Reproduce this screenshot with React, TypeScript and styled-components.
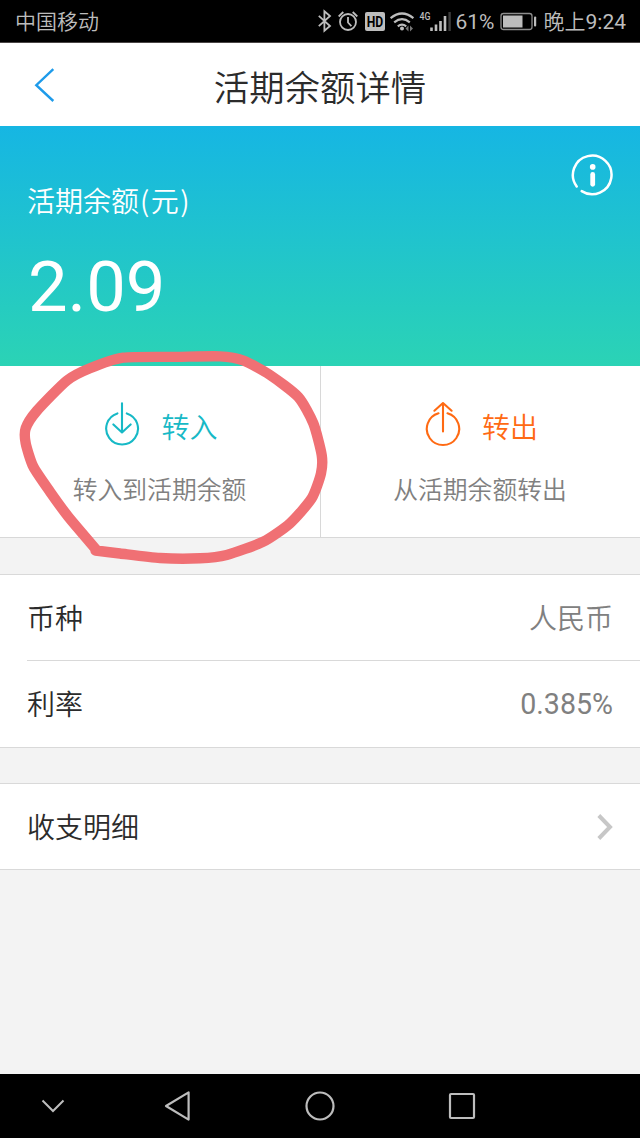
import React from 'react';
import styled, { createGlobalStyle } from 'styled-components';

const GlobalStyle = createGlobalStyle`
  * { box-sizing: border-box; }
  body {
    margin: 0;
    background: #f3f3f3;
    font-family: Roboto, 'Noto Sans CJK SC', sans-serif;
    font-weight: 350;
  }
  svg { display: block; flex: none; }
`;

const Screen = styled.div`
  position: relative;
  width: 640px;
  height: 1138px;
  display: flex;
  flex-direction: column;
  overflow: hidden;
  background: #f3f3f3;
`;

const StatusBar = styled.header`
  height: 43px;
  flex: none;
  display: flex;
  align-items: center;
  justify-content: space-between;
  padding: 0 14px 0 15px;
  background: #000;
  border-bottom: 1px solid #4a4646;
  color: #bdbdbd;
  font-size: 21px;
  line-height: 42px;
  white-space: nowrap;
`;

const StatusGroup = styled.div`
  display: flex;
  align-items: center;
`;

const StatusText = styled.span<{ $width?: number; $regular?: boolean }>`
  width: ${(p) => (p.$width ? `${p.$width}px` : 'auto')};
  padding-top: 2px;
  font-weight: ${(p) => (p.$regular ? 400 : 350)};
`;

const TitleBar = styled.div`
  height: 83px;
  flex: none;
  display: grid;
  grid-template-columns: 90px 1fr 90px;
  align-items: center;
  background: #fff;
`;

const BackButton = styled.button`
  height: 83px;
  padding: 0 0 0 34px;
  border: 0;
  background: none;
`;

const Title = styled.h1`
  margin: 0;
  padding-top: 8px;
  text-align: center;
  font-size: 35.4px;
  line-height: 48px;
  font-weight: 350;
  color: #2b2b2b;
`;

const Hero = styled.section`
  height: 240px;
  flex: none;
  display: flex;
  justify-content: space-between;
  padding: 28px 27px 0;
  background: linear-gradient(#16b6e3, #2bd3b5);
  color: #fff;
`;

const Balance = styled.div`
  display: flex;
  flex-direction: column;
  padding-top: 25px;
`;

const BalanceLabel = styled.span`
  font-family: 'Noto Sans CJK SC', sans-serif;
  font-size: 28px;
  line-height: 42px;
`;

const Unit = styled.span`
  margin-left: 1px;
  letter-spacing: 1.5px;
`;

const Amount = styled.span`
  margin: 26px 0 0 1px;
  font-size: 70.5px;
  line-height: 80px;
  font-weight: 400;
`;

const Actions = styled.section`
  height: 172px;
  flex: none;
  display: grid;
  grid-template-columns: 321px 319px;
  background: #fff;
  border-bottom: 1px solid #d8d8d8;
`;

const Action = styled.button<{ $divided?: boolean }>`
  display: flex;
  flex-direction: column;
  align-items: center;
  padding: 34px 0 0;
  border: 0;
  border-right: ${(p) => (p.$divided ? '1px solid #d8d8d8' : '0')};
  background: none;
  font: inherit;
`;

const ActionHead = styled.span<{ $color: string }>`
  display: flex;
  align-items: center;
  gap: 21px;
  padding-left: 2px;
  color: ${(p) => p.$color};
  font-size: 28px;
  line-height: 42px;
`;

const ActionName = styled.span`
  padding-top: 8px;
`;

const ActionNote = styled.span`
  margin-top: 23px;
  padding-right: 1px;
  color: #808080;
  font-size: 24.8px;
  line-height: 36px;
`;

const List = styled.section<{ $gap: number }>`
  flex: none;
  margin-top: ${(p) => p.$gap}px;
  background: #fff;
  border-top: 1px solid #d9d9d9;
  border-bottom: 1px solid #d9d9d9;
`;

const Row = styled.div<{ $divided?: boolean; $height: number }>`
  height: ${(p) => p.$height}px;
  margin-left: 27px;
  padding-right: 27px;
  display: flex;
  align-items: center;
  justify-content: space-between;
  border-bottom: ${(p) => (p.$divided ? '1px solid #d9d9d9' : '0')};
  font-size: 28px;
  line-height: 42px;
  color: #2b2b2b;
`;

const RowLabel = styled.span`
  padding-top: 4px;
`;

const Value = styled.span<{ $numeric?: boolean }>`
  padding-top: ${(p) => (p.$numeric ? 0 : 4)}px;
  color: #808080;
  font-size: ${(p) => (p.$numeric ? 28.6 : 28)}px;
  font-weight: ${(p) => (p.$numeric ? 400 : 350)};
`;

const NavBar = styled.nav`
  height: 64px;
  flex: none;
  margin-top: auto;
  display: flex;
  align-items: center;
  background: #000;
`;

const NavSlot = styled.div<{ $width: number }>`
  width: ${(p) => p.$width}px;
  display: flex;
  justify-content: center;
`;

const Marker = styled.svg`
  position: absolute;
  left: 0;
  top: 340px;
  pointer-events: none;
`;

const GREY = '#bdbdbd';

const StatusIcons = () => (
  <svg width="141" height="42" viewBox="315 0 141 42" fill="none" stroke={GREY} strokeWidth="1.8">
    <path d="M318.8 15.8 330 26l-5.6 4.8V11.2L330 16l-11.2 10.2" />
    <circle cx="348" cy="22" r="8" />
    <path d="M348 17v5.5l3.4 3.6M338.7 16.5l4.6-4.5M357.3 16.5l-4.6-4.5" />
    <rect x="365" y="12" width="20" height="19" rx="2" fill={GREY} stroke="none" />
    <text x="375" y="26.8" textAnchor="middle" fill="#000" stroke="none" fontFamily="Roboto" fontWeight="700" fontSize="15" textLength="16.5" lengthAdjust="spacingAndGlyphs">HD</text>
    <path d="M390.6 18.2q11.4-9.4 22.8 0M394.2 22.4q7.8-6.4 15.6 0M397.8 26.4q4.2-3.4 8.4 0" strokeWidth="2.2" />
    <circle cx="402" cy="28.6" r="2" fill={GREY} stroke="none" />
    <path d="M408.5 25.5v6l-3-3zM410 25.5v6l3-3z" fill="#777" stroke="none" />
    <text x="419.5" y="20" fill={GREY} stroke="none" fontFamily="Roboto" fontWeight="500" fontSize="11.5" textLength="11" lengthAdjust="spacingAndGlyphs">4G</text>
    <path d="M431.5 31v-3.5M436 31v-6.5M440.5 31v-10M445 31v-15" strokeWidth="2.6" />
    <path d="M449.6 31V12" stroke="#3c3c3c" strokeWidth="2.4" />
  </svg>
);

const Battery = () => (
  <svg width="49" height="42" viewBox="494 0 49 42">
    <rect x="500" y="13.5" width="31" height="16" rx="2.5" fill="none" stroke="#8c8c8c" strokeWidth="1.3" />
    <rect x="502" y="15.5" width="19.5" height="12" fill={GREY} />
    <rect x="533" y="16.5" width="2.2" height="10" rx="1" fill={GREY} />
  </svg>
);

const InfoIcon = () => (
  <svg width="42" height="42" viewBox="570.5 153.5 42 42" fill="none" stroke="#fff" strokeLinecap="round">
    <path d="M576.2 185.9A19.3 19.3 0 1 1 581.2 190.6" strokeWidth="2.5" />
    <circle cx="592.2" cy="166.4" r="2.8" fill="#fff" stroke="none" />
    <path d="M592.2 174v9.8" strokeWidth="4.8" />
  </svg>
);

const TransferIcon = ({ out }: { out?: boolean }) => (
  <svg width="36" height="50" viewBox="0 0 36 50" fill="none" stroke="currentColor" strokeWidth="2.1" strokeLinecap="round" strokeLinejoin="round">
    {out ? (
      <path d="M13.5 13.3A16.2 16.2 0 1 0 22.5 13.3M18 31.5V3M9.4 10.7 18 3l8.6 7.7" />
    ) : (
      <path d="M13.4 13.4A15.9 15.9 0 1 0 22.8 13.4M18 3.3V32M9.4 24.4 18 32.4l8.6-8" />
    )}
  </svg>
);

type Point = [number, number];

const loop: Point[] = [
  [97, 210.5], [68.3, 176.7], [50, 151.7], [33.3, 126.7], [25.7, 103.3], [25.7, 88.3],
  [36.7, 71], [66.7, 40.7], [90, 28.3], [123.3, 17.7], [176.7, 16.9], [220, 16.4],
  [243.3, 20.5], [270, 35], [298.3, 57], [313.3, 83.3], [321.7, 115], [321, 133.3],
  [311.7, 158.3], [290, 183.3], [263.3, 201.7], [226.7, 215], [200, 218.3], [160, 218],
  [120, 213.5], [95.5, 210.5],
];

// Slightly tightened Catmull-Rom interpolation through the stroke points.
const strokePath = (pts: Point[]) =>
  pts.slice(1).reduce((d, p, i) => {
    const a = pts[Math.max(i - 1, 0)];
    const b = pts[i];
    const n = pts[Math.min(i + 2, pts.length - 1)];
    const c1 = [b[0] + (p[0] - a[0]) / 9, b[1] + (p[1] - a[1]) / 9];
    const c2 = [p[0] - (n[0] - b[0]) / 9, p[1] - (n[1] - b[1]) / 9];
    return `${d}C${c1.join(' ')} ${c2.join(' ')} ${p.join(' ')}`;
  }, `M${pts[0].join(' ')}`);

export default function App() {
  return (
    <Screen>
      <GlobalStyle />
      <StatusBar>
        <StatusText>中国移动</StatusText>
        <StatusGroup>
          <StatusIcons />
          <StatusText $width={39} $regular>61%</StatusText>
          <Battery />
          <StatusText>晚上<StatusText $regular>9:24</StatusText></StatusText>
        </StatusGroup>
      </StatusBar>

      <TitleBar>
        <BackButton aria-label="返回">
          <svg width="22" height="36" viewBox="0 0 22 36" fill="none" stroke="#1e9bea" strokeWidth="2.4">
            <path d="M19.3 2.2 2.3 18.2 19.3 34" />
          </svg>
        </BackButton>
        <Title>活期余额详情</Title>
      </TitleBar>

      <Hero>
        <Balance>
          <BalanceLabel>活期余额<Unit>(元)</Unit></BalanceLabel>
          <Amount>2.09</Amount>
        </Balance>
        <InfoIcon />
      </Hero>

      <Actions>
        <Action $divided>
          <ActionHead $color="#17b9c6"><TransferIcon /><ActionName>转入</ActionName></ActionHead>
          <ActionNote>转入到活期余额</ActionNote>
        </Action>
        <Action>
          <ActionHead $color="#ff6a13"><TransferIcon out /><ActionName>转出</ActionName></ActionHead>
          <ActionNote>从活期余额转出</ActionNote>
        </Action>
      </Actions>

      <List $gap={36}>
        <Row $divided $height={86}>
          <RowLabel>币种</RowLabel>
          <Value>人民币</Value>
        </Row>
        <Row $height={86}>
          <RowLabel>利率</RowLabel>
          <Value $numeric>0.385%</Value>
        </Row>
      </List>

      <List $gap={35}>
        <Row $height={85}>
          <RowLabel>收支明细</RowLabel>
          <svg width="16" height="28" viewBox="0 0 16 28" fill="none" stroke="#c7c7c7" strokeWidth="4">
            <path d="M1.8 2.5 13 14 1.8 25.5" />
          </svg>
        </Row>
      </List>

      <NavBar>
        <NavSlot $width={106}>
          <svg width="24" height="16" viewBox="0 0 24 16" fill="none" stroke={GREY} strokeWidth="2">
            <path d="M1.5 2.5 12 13 22.5 2.5" />
          </svg>
        </NavSlot>
        <NavSlot $width={142}>
          <svg width="28" height="32" viewBox="0 0 28 32" fill="none" stroke={GREY} strokeWidth="2.2" strokeLinejoin="round">
            <path d="M3 16 25.6 2.4v27.2z" />
          </svg>
        </NavSlot>
        <NavSlot $width={144}>
          <svg width="32" height="32" viewBox="0 0 32 32" fill="none" stroke={GREY} strokeWidth="2.2">
            <circle cx="16" cy="16" r="13.5" />
          </svg>
        </NavSlot>
        <NavSlot $width={140}>
          <svg width="28" height="28" viewBox="0 0 28 28" fill="none" stroke={GREY} strokeWidth="2.2">
            <rect x="2" y="2" width="24" height="24" rx="1" />
          </svg>
        </NavSlot>
      </NavBar>

      <Marker width="340" height="230" viewBox="0 0 340 230" fill="none" stroke="#f07074" strokeWidth="10.4" strokeLinecap="round" strokeLinejoin="round">
        <path d={strokePath(loop)} />
      </Marker>
    </Screen>
  );
}
